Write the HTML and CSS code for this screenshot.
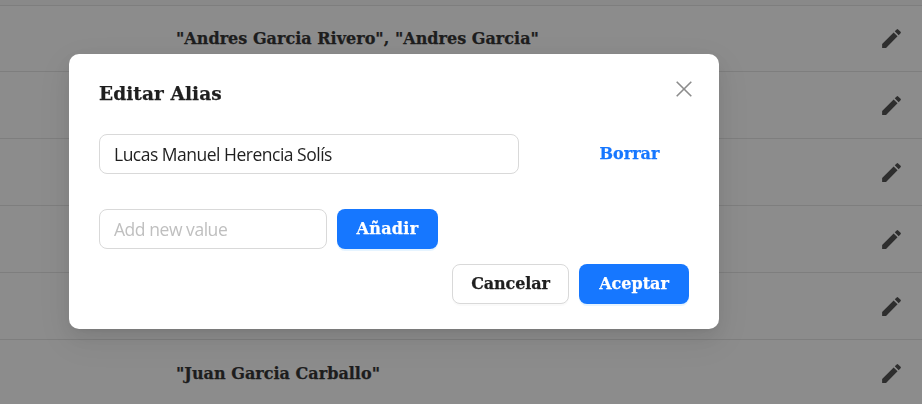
FILE: index.html
```html
<!DOCTYPE html>
<html lang="es">
<head>
<meta charset="utf-8">
<title>Editar Alias</title>
<link rel="stylesheet" href="styles.css">
</head>
<body>
<svg class="defs" width="0" height="0"><symbol id="pencil" viewBox="0 0 24 24"><path d="M3 17.25V21h3.75L17.81 9.94l-3.75-3.75L3 17.25zM20.71 7.04a1 1 0 0 0 0-1.41l-2.34-2.34a1 1 0 0 0-1.41 0l-1.83 1.83 3.75 3.75 1.83-1.83z"/></symbol></svg>
<main class="table">
  <div class="head"></div>
  <div class="row first"><span class="names">"Andres Garcia Rivero", "Andres Garcia"</span><svg class="edit"><use href="#pencil"/></svg></div>
  <div class="row"><svg class="edit"><use href="#pencil"/></svg></div>
  <div class="row"><svg class="edit"><use href="#pencil"/></svg></div>
  <div class="row"><svg class="edit"><use href="#pencil"/></svg></div>
  <div class="row"><svg class="edit"><use href="#pencil"/></svg></div>
  <div class="row"><span class="names">"Juan Garcia Carballo"</span><svg class="edit"><use href="#pencil"/></svg></div>
</main>
<div class="mask">
  <section class="modal" role="dialog">
    <header class="top"><h1 class="title">Editar Alias</h1><svg class="close" viewBox="0 0 16 16"><path d="M.7.7l14.6 14.6M15.3.7L.7 15.3"/></svg></header>
    <div class="line"><div class="input wide"><span class="value">Lucas Manuel Herencia Solís</span></div><button class="btn link">Borrar</button></div>
    <div class="line second"><div class="input narrow"><span class="placeholder">Add new value</span></div><button class="btn primary add">Añadir</button></div>
    <footer class="foot"><button class="btn cancel">Cancelar</button><button class="btn primary accept">Aceptar</button></footer>
  </section>
</div>
</body>
</html>
```
FILE: styles.css
```css
* { box-sizing: border-box; }
body { margin: 0; height: 404px; overflow: hidden; background: #fff; font-family: "DejaVu Serif", serif; }
.defs { position: absolute; }
.head { height: 6px; background: #fafafa; border-bottom: 1px solid #e6e6e6; }
.row { height: 67px; display: flex; align-items: center; padding: 0 18px 0 176px; border-bottom: 1px solid #e6e6e6; }
.first { height: 66px; }
.names { font-size: 16px; font-weight: 700; color: #363636; white-space: nowrap; letter-spacing: 0.02px; -webkit-text-stroke: 0.25px; }
.edit { width: 25px; height: 25px; margin-left: auto; fill: #545454; }
.mask { position: fixed; inset: 0; background: rgba(0,0,0,.45); padding: 54px 0 0 69px; }
.modal { width: 650px; height: 275px; background: #fff; border-radius: 10px; padding: 24px 30px 25px; box-shadow: 0 7.5px 20px rgba(0,0,0,.08), 0 4px 7.5px -5px rgba(0,0,0,.12), 0 11px 35px 10px rgba(0,0,0,.05); }
.top { display: flex; justify-content: space-between; height: 56px; padding-right: 2px; }
.title { margin: 0; font-size: 18.5px; line-height: 32px; font-weight: 700; color: #1f1f1f; letter-spacing: 0.1px; -webkit-text-stroke: 0.25px; }
.close { width: 16px; height: 16px; margin: 3px -5px 0 0; fill: none; stroke: #8c8c8c; stroke-width: 1.6; }
.line { display: flex; gap: 10px; height: 40px; }
.second { margin-top: 35px; }
.input { height: 40px; border: 1px solid #d9d9d9; border-radius: 8px; padding: 0 14px; font: 17.5px/39px "Open Sans", sans-serif; white-space: nowrap; color: #1f1f1f; }
.wide { width: 420px; }
.narrow { width: 228px; }
.value { letter-spacing: -0.5px; }
.placeholder { color: #bfbfbf; letter-spacing: -0.45px; }
.btn { height: 40px; padding: 0; border: 0; border-radius: 8px; font: 700 16px/36px "DejaVu Serif", serif; white-space: nowrap; letter-spacing: 0; -webkit-text-stroke: 0.25px; }
.link { width: 101px; margin-left: 50px; background: none; color: #1677ff; }
.primary { background: #1677ff; color: #fff; box-shadow: 0 2px 0 rgba(5,145,255,.1); }
.add { width: 101px; letter-spacing: 0.3px; }
.foot { display: flex; justify-content: flex-end; gap: 10px; margin-top: 15px; }
.cancel { width: 117px; border: 1px solid #d9d9d9; background: #fff; color: #1f1f1f; box-shadow: 0 2px 0 rgba(0,0,0,.02); letter-spacing: -0.1px; }
.accept { width: 110px; }
```
